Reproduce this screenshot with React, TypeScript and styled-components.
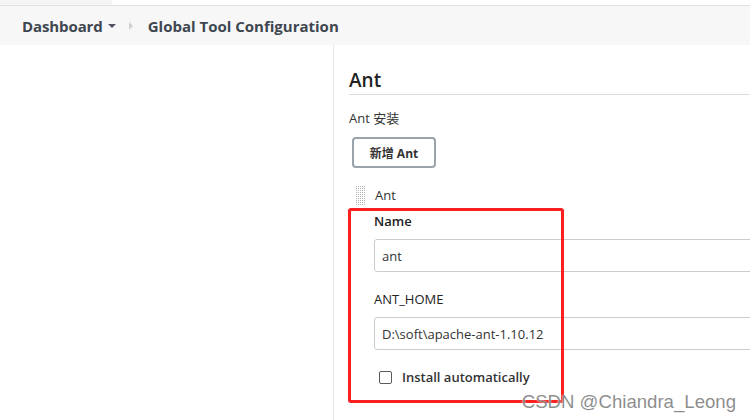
import React from 'react';
import styled, {createGlobalStyle} from 'styled-components';

const GlobalStyle = createGlobalStyle`
  html, body {
    margin: 0;
    padding: 0;
    background: #ffffff;
  }
  body {
    font-family: "Open Sans", "Noto Sans", "Noto Sans CJK SC", sans-serif;
    color: #333333;
  }
`

const Page = styled.div`
  position: relative;
  width: 750px;
  height: 420px;
  overflow: hidden;
  display: flex;
  flex-direction: column;
`

const TopStrip = styled.div`
  display: flex;
  height: 5px;
  border-bottom: 1px solid #e3e3e3;
`

const StripPart = styled.div<{$shade?: boolean}>`
  width: ${p => (p.$shade ? '112px' : 'auto')};
  flex: ${p => (p.$shade ? 'none' : '1')};
  background: ${p => (p.$shade ? '#f5f5f5' : '#ffffff')};
`

const Breadcrumbs = styled.nav`
  display: flex;
  align-items: center;
  height: 39px;
  padding-left: 22px;
  background: #f7f7f7;
`

const Crumb = styled.span`
  font-size: 15px;
  font-weight: 700;
  color: #3e4650;
  letter-spacing: -0.1px;
`

const Caret = styled.span`
  width: 0;
  height: 0;
  margin: 1px 0 0 5px;
  border-left: 4px solid transparent;
  border-right: 4px solid transparent;
  border-top: 4px solid #4d545d;
`

const Chevron = styled.span`
  width: 0;
  height: 0;
  margin: 0 15px 0 13px;
  border-top: 4px solid transparent;
  border-bottom: 4px solid transparent;
  border-left: 4px solid #d0d0d0;
`

const Title = styled(Crumb)`
  letter-spacing: 0;
`

const Main = styled.div`
  flex: 1;
  display: flex;
  min-height: 0;
`

const SidePanel = styled.aside`
  width: 333px;
  flex: none;
  border-right: 1px solid #e8e8e8;
`

const Content = styled.section`
  flex: 1;
  min-width: 0;
  padding: 22px 0 0 15px;
  overflow: hidden;
`

const Heading = styled.h2`
  margin: 0;
  padding-bottom: 1px;
  font-size: 19px;
  font-weight: 600;
  line-height: 26px;
  color: #222222;
  border-bottom: 1px solid #dcdcdc;
`

const SectionLabel = styled.div`
  margin-top: 14px;
  font-size: 13px;
  line-height: 18px;
  color: #333333;
`

const AddButton = styled.button`
  display: block;
  margin: 10px 0 0 3px;
  width: 84px;
  height: 31px;
  padding: 0;
  border: 2px solid #99a3aa;
  border-radius: 4px;
  background: #ffffff;
  font-family: inherit;
  font-size: 12px;
  font-weight: 700;
  color: #333333;
`

const ItemHeader = styled.div`
  display: flex;
  align-items: center;
  gap: 9px;
  margin: 17px 0 0 6px;
  height: 20px;
  font-size: 13px;
  color: #333333;
`

const DragHandle = styled.span`
  width: 11px;
  height: 21px;
  background:
    linear-gradient(90deg, #ffffff 1px, transparent 1px) 0 0 / 2px 2px,
    linear-gradient(#ffffff 1px, transparent 1px) 0 0 / 2px 2px,
    #b3b3b3;
`

const Fields = styled.div`
  display: flex;
  flex-direction: column;
  padding: 7px 0 0 25px;
`

const FieldLabel = styled.label<{$strong?: boolean}>`
  font-size: 13px;
  line-height: 18px;
  font-weight: ${p => (p.$strong ? 600 : 400)};
  color: #222222;
`

const TextInput = styled.input`
  box-sizing: border-box;
  width: 520px;
  height: 33px;
  margin: 9px 0 18px;
  padding: 0 7px;
  border: 1px solid #cccccc;
  border-radius: 3px;
  font-family: inherit;
  font-size: 13px;
  color: #333333;
  background: #ffffff;
  outline: none;
`

const CheckRow = styled.label`
  display: flex;
  align-items: center;
  gap: 10px;
  margin: 0 0 0 5px;
  font-size: 13px;
  font-weight: 600;
  color: #333333;
`

const CheckBox = styled.span`
  box-sizing: border-box;
  width: 13px;
  height: 13px;
  border: 1px solid #5a5a5a;
  border-radius: 2px;
  background: #ffffff;
`

const Highlight = styled.div`
  position: absolute;
  left: 348px;
  top: 208px;
  width: 216px;
  height: 195px;
  box-sizing: border-box;
  border: 3px solid #fb1f1f;
  border-radius: 3px;
  pointer-events: none;
`

const Watermark = styled.div`
  position: absolute;
  right: 14px;
  bottom: 7px;
  font-family: "Liberation Sans", Arial, sans-serif;
  font-size: 18.6px;
  color: rgba(120, 120, 120, 0.85);
  text-shadow: 0 0 2px #ffffff;
  pointer-events: none;
`

const App: React.FC = () => {
  return (
    <Page>
      <GlobalStyle />
      <TopStrip>
        <StripPart $shade />
        <StripPart />
      </TopStrip>
      <Breadcrumbs>
        <Crumb>Dashboard</Crumb>
        <Caret />
        <Chevron />
        <Title>Global Tool Configuration</Title>
      </Breadcrumbs>
      <Main>
        <SidePanel />
        <Content>
          <Heading>Ant</Heading>
          <SectionLabel>Ant 安装</SectionLabel>
          <AddButton>新增 Ant</AddButton>
          <ItemHeader>
            <DragHandle />
            <span>Ant</span>
          </ItemHeader>
          <Fields>
            <FieldLabel $strong>Name</FieldLabel>
            <TextInput defaultValue="ant" />
            <FieldLabel>ANT_HOME</FieldLabel>
            <TextInput defaultValue="D:\soft\apache-ant-1.10.12" />
            <CheckRow>
              <CheckBox />
              Install automatically
            </CheckRow>
          </Fields>
        </Content>
      </Main>
      <Highlight />
      <Watermark>CSDN @Chiandra_Leong</Watermark>
    </Page>
  );
}

export default App;
